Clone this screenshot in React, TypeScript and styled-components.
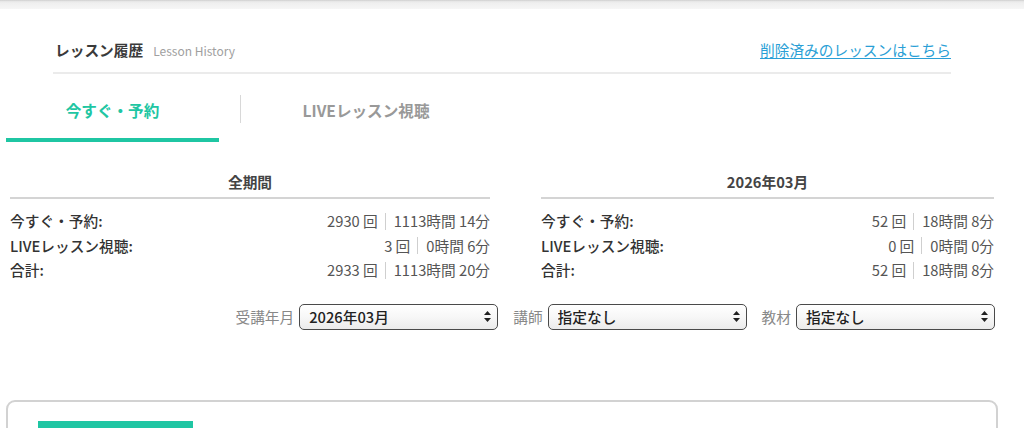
import React from 'react';
import styled, { createGlobalStyle } from 'styled-components';

const Global = createGlobalStyle`
  html, body { margin: 0; padding: 0; background: #fff; overflow: hidden; }
  body {
    font-family: "Noto Sans CJK JP", "Noto Sans", sans-serif;
    color: #333;
    -webkit-font-smoothing: antialiased;
  }
`;

const TEAL = '#1fc6a3';

const TopBar = styled.div`
  height: 9px;
  background: linear-gradient(#c9c9c9 0px, #e4e4e4 1px, #efefef 3px, #f6f6f6 9px);
`;

const Page = styled.div`
  padding: 0 26px 0 6px;
`;

const Header = styled.div`
  margin: 0 47px;
  padding: 30px 0 10px 2px;
  display: flex;
  align-items: baseline;
  justify-content: space-between;
  border-bottom: 2px solid #ebebeb;
  line-height: 22px;
`;

const TitleWrap = styled.div`
  display: flex;
  align-items: baseline;
  gap: 10px;
`;

const Title = styled.span`
  font-size: 14.7px;
  font-weight: 700;
  color: #3a3a3a;
`;

const SubTitle = styled.span`
  font-size: 12px;
  color: #a0a0a0;
`;

const DeletedLink = styled.a`
  font-size: 14.7px;
  color: #2a9fd6;
  text-decoration: underline;
  text-underline-offset: 2px;
  cursor: pointer;
`;

const TabBar = styled.div`
  display: flex;
  align-items: flex-start;
`;

const Tab = styled.div<{ $active?: boolean; $width: number }>`
  width: ${(p) => p.$width}px;
  padding: 25px 0 17px;
  text-align: center;
  font-size: 15.6px;
  font-weight: 700;
  line-height: 22px;
  color: ${(p) => (p.$active ? TEAL : '#999')};
  border-bottom: 4px solid ${(p) => (p.$active ? TEAL : 'transparent')};
`;

const TabDivider = styled.div`
  width: 1px;
  height: 28px;
  margin: 21px 0 0 21px;
  background: #d8d8d8;
`;

const StatsGrid = styled.div`
  display: grid;
  grid-template-columns: 480px 453px;
  column-gap: 51px;
  padding: 0 4px;
  margin-top: 29px;
`;

const StatsCol = styled.div`
  display: flex;
  flex-direction: column;
`;

const StatsHead = styled.div`
  text-align: center;
  font-size: 14.7px;
  font-weight: 700;
  color: #444;
  line-height: 22px;
  padding-bottom: 4px;
  border-bottom: 2px solid #d4d4d4;
  margin-bottom: 10px;
`;

const StatRow = styled.div`
  display: flex;
  justify-content: space-between;
  font-size: 14.7px;
  line-height: 24.5px;
`;

const StatLabel = styled.span`
  font-weight: 500;
  color: #333;
`;

const StatValue = styled.span`
  color: #555;
  display: flex;
  align-items: center;
`;

const Sep = styled.span`
  display: inline-block;
  width: 1px;
  height: 17px;
  background: #cfcfcf;
  margin: 0 8px 0 7px;
`;

const Filters = styled.div`
  display: flex;
  justify-content: flex-end;
  align-items: center;
  gap: 15px;
  margin-top: 21px;
  padding-right: 3px;
`;

const FilterGroup = styled.label`
  display: flex;
  align-items: center;
  gap: 5px;
`;

const FilterLabel = styled.span`
  font-size: 14.7px;
  color: #888;
`;

const SelectBox = styled.div`
  position: relative;
  width: 199px;
  height: 26px;
`;

const Select = styled.select`
  appearance: none;
  -webkit-appearance: none;
  width: 100%;
  height: 100%;
  box-sizing: border-box;
  border: 1px solid #4a4a4a;
  border-radius: 5px;
  background: linear-gradient(#ffffff 0%, #f7f7f7 50%, #ebebeb 100%);
  padding: 0 24px 0 9px;
  font-family: "Noto Sans CJK JP", "Noto Sans", sans-serif;
  font-size: 14.7px;
  font-weight: 500;
  color: #222;
  outline: none;
`;

const Arrow = styled.svg`
  position: absolute;
  right: 7px;
  top: 7px;
  pointer-events: none;
`;

const Card = styled.div`
  margin-top: 70px;
  border: 2px solid #d2d2d2;
  border-radius: 9px;
  padding: 19px 30px 0;
  height: 80px;
`;

const CardBar = styled.div`
  width: 155px;
  height: 30px;
  background: ${TEAL};
`;

type Stat = { label: string; count: string; h: string; m: string };

const allStats: Stat[] = [
  { label: '今すぐ・予約:', count: '2930', h: '1113', m: '14' },
  { label: 'LIVEレッスン視聴:', count: '3', h: '0', m: '6' },
  { label: '合計:', count: '2933', h: '1113', m: '20' },
];

const monthStats: Stat[] = [
  { label: '今すぐ・予約:', count: '52', h: '18', m: '8' },
  { label: 'LIVEレッスン視聴:', count: '0', h: '0', m: '0' },
  { label: '合計:', count: '52', h: '18', m: '8' },
];

const StatsBlock = ({ title, rows }: { title: string; rows: Stat[] }) => (
  <StatsCol>
    <StatsHead>{title}</StatsHead>
    {rows.map((r) => (
      <StatRow key={r.label}>
        <StatLabel>{r.label}</StatLabel>
        <StatValue>
          {r.count} 回<Sep />
          {r.h}時間 {r.m}分
        </StatValue>
      </StatRow>
    ))}
  </StatsCol>
);

const Dropdown = ({ label, value }: { label: string; value: string }) => (
  <FilterGroup>
    <FilterLabel>{label}</FilterLabel>
    <SelectBox>
      <Select defaultValue={value}>
        <option value={value}>{value}</option>
      </Select>
      <Arrow width="7" height="11" viewBox="0 0 7 11">
        <path d="M3.5 0 L7 4 L0 4 Z" fill="#222" />
        <path d="M0 7 L7 7 L3.5 11 Z" fill="#222" />
      </Arrow>
    </SelectBox>
  </FilterGroup>
);

export default function App() {
  return (
    <>
      <Global />
      <TopBar />
      <Page>
        <Header>
          <TitleWrap>
            <Title>レッスン履歴</Title>
            <SubTitle>Lesson History</SubTitle>
          </TitleWrap>
          <DeletedLink>削除済みのレッスンはこちら</DeletedLink>
        </Header>
        <TabBar>
          <Tab $active $width={213}>今すぐ・予約</Tab>
          <TabDivider />
          <Tab $width={250}>LIVEレッスン視聴</Tab>
        </TabBar>
        <StatsGrid>
          <StatsBlock title="全期間" rows={allStats} />
          <StatsBlock title="2026年03月" rows={monthStats} />
        </StatsGrid>
        <Filters>
          <Dropdown label="受講年月" value="2026年03月" />
          <Dropdown label="講師" value="指定なし" />
          <Dropdown label="教材" value="指定なし" />
        </Filters>
        <Card>
          <CardBar />
        </Card>
      </Page>
    </>
  );
}
